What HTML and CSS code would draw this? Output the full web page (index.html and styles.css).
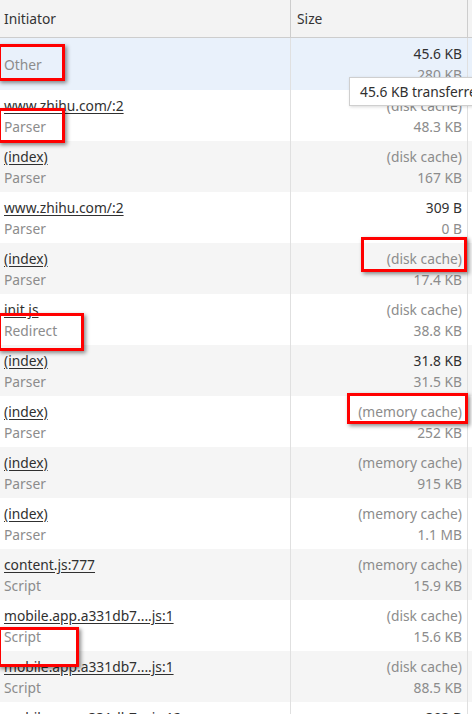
FILE: index.html
```html
<!DOCTYPE html>
<html>
<head>
<meta charset="utf-8">
<link rel="stylesheet" href="styles.css">
</head>
<body>
<div class="table">
  <div class="row head">
    <div class="cell c1">Initiator</div>
    <div class="cell c2">Size</div>
    <div class="cell c3"></div>
  </div>
  <div class="row sel tall">
    <div class="cell c1"><span class="sub">Other</span></div>
    <div class="cell c2 num"><span>45.6 KB</span><span class="sub">280 KB</span></div>
    <div class="cell c3"></div>
  </div>
  <div class="row">
    <div class="cell c1"><span class="link">www.zhihu.com/:2</span><span class="sub">Parser</span></div>
    <div class="cell c2 num"><span class="sub">(disk cache)</span><span class="sub">48.3 KB</span></div>
    <div class="cell c3"></div>
  </div>
  <div class="row alt">
    <div class="cell c1"><span class="link">(index)</span><span class="sub">Parser</span></div>
    <div class="cell c2 num"><span class="sub">(disk cache)</span><span class="sub">167 KB</span></div>
    <div class="cell c3"></div>
  </div>
  <div class="row">
    <div class="cell c1"><span class="link">www.zhihu.com/:2</span><span class="sub">Parser</span></div>
    <div class="cell c2 num"><span>309 B</span><span class="sub">0 B</span></div>
    <div class="cell c3"></div>
  </div>
  <div class="row alt">
    <div class="cell c1"><span class="link">(index)</span><span class="sub">Parser</span></div>
    <div class="cell c2 num"><span class="sub">(disk cache)</span><span class="sub">17.4 KB</span></div>
    <div class="cell c3"></div>
  </div>
  <div class="row">
    <div class="cell c1"><span class="link">init.js</span><span class="sub">Redirect</span></div>
    <div class="cell c2 num"><span class="sub">(disk cache)</span><span class="sub">38.8 KB</span></div>
    <div class="cell c3"></div>
  </div>
  <div class="row alt">
    <div class="cell c1"><span class="link">(index)</span><span class="sub">Parser</span></div>
    <div class="cell c2 num"><span>31.8 KB</span><span class="sub">31.5 KB</span></div>
    <div class="cell c3"></div>
  </div>
  <div class="row">
    <div class="cell c1"><span class="link">(index)</span><span class="sub">Parser</span></div>
    <div class="cell c2 num"><span class="sub">(memory cache)</span><span class="sub">252 KB</span></div>
    <div class="cell c3"></div>
  </div>
  <div class="row alt">
    <div class="cell c1"><span class="link">(index)</span><span class="sub">Parser</span></div>
    <div class="cell c2 num"><span class="sub">(memory cache)</span><span class="sub">915 KB</span></div>
    <div class="cell c3"></div>
  </div>
  <div class="row">
    <div class="cell c1"><span class="link">(index)</span><span class="sub">Parser</span></div>
    <div class="cell c2 num"><span class="sub">(memory cache)</span><span class="sub">1.1 MB</span></div>
    <div class="cell c3"></div>
  </div>
  <div class="row alt">
    <div class="cell c1"><span class="link">content.js:777</span><span class="sub">Script</span></div>
    <div class="cell c2 num"><span class="sub">(memory cache)</span><span class="sub">15.9 KB</span></div>
    <div class="cell c3"></div>
  </div>
  <div class="row">
    <div class="cell c1"><span class="link">mobile.app.a331db7....js:1</span><span class="sub">Script</span></div>
    <div class="cell c2 num"><span class="sub">(disk cache)</span><span class="sub">15.6 KB</span></div>
    <div class="cell c3"></div>
  </div>
  <div class="row alt">
    <div class="cell c1"><span class="link">mobile.app.a331db7....js:1</span><span class="sub">Script</span></div>
    <div class="cell c2 num"><span class="sub">(disk cache)</span><span class="sub">88.5 KB</span></div>
    <div class="cell c3"></div>
  </div>
  <div class="row">
    <div class="cell c1"><span class="link">mobile.app.a331db7....js:12</span><span class="sub">Script</span></div>
    <div class="cell c2 num"><span>303 B</span><span class="sub">0 B</span></div>
    <div class="cell c3"></div>
  </div>
</div>

<div class="tooltip">45.6 KB transferred over network, resource size: 280 KB</div>

<div class="mark m1"></div>
<div class="mark m2"></div>
<div class="mark m3"></div>
<div class="mark m4"></div>
<div class="mark m5"></div>
<div class="mark m6"></div>
</body>
</html>
```

FILE: styles.css
```css
html, body {
  margin: 0;
  padding: 0;
  overflow: hidden;
  width: 472px;
  height: 714px;
  background: #ffffff;
}
body {
  position: relative;
  font-family: "Noto Sans", "Open Sans", sans-serif;
  font-size: 13.8px;
  color: #303030;
}
.table {
  display: flex;
  flex-direction: column;
}
.row {
  display: grid;
  grid-template-columns: 291px 177px 1fr;
  height: 51px;
  background: #ffffff;
}
.row.alt { background: #f5f5f5; }
.row.sel { background: #e9f1fb; }
.row.tall { height: 52px; }
.row.head {
  height: 37px;
  background: #f3f3f3;
  border-bottom: 1px solid #cdcdcd;
}
.cell {
  display: flex;
  flex-direction: column;
  justify-content: center;
  line-height: 21px;
  border-right: 1px solid #e0e0e0;
  white-space: nowrap;
  overflow: hidden;
}
.head .cell {
  border-right-color: #cdcdcd;
  color: #333333;
}
.c1 { padding-left: 4px; }
.c2 { padding-left: 6px; }
.head .c2 { align-items: flex-start; }
.num {
  align-items: flex-end;
  padding-right: 5px;
}
.c3 { border-right: none; }
.link {
  text-decoration: underline;
  text-underline-offset: 2px;
}
.sub { color: #8c8c8c; }

.tooltip {
  position: absolute;
  left: 349px;
  top: 77px;
  height: 27px;
  line-height: 27px;
  padding: 0 10px;
  background: #ffffff;
  border: 1px solid #cfcfcf;
  box-shadow: 1px 1px 3px rgba(0,0,0,0.15);
  white-space: nowrap;
  color: #303030;
}

.mark {
  position: absolute;
  border: 3px solid #ff0000;
  box-shadow: 2px 2px 4px rgba(0,0,0,0.45);
}
.m1 { left: -2px; top: 44px; width: 61px; height: 31px; }
.m2 { left: -2px; top: 108px; width: 61px; height: 29px; }
.m3 { left: 361px; top: 237px; width: 100px; height: 29px; }
.m4 { left: -2px; top: 313px; width: 80px; height: 32px; }
.m5 { left: 347px; top: 393px; width: 115px; height: 25px; }
.m6 { left: -2px; top: 627px; width: 75px; height: 34px; }
```
